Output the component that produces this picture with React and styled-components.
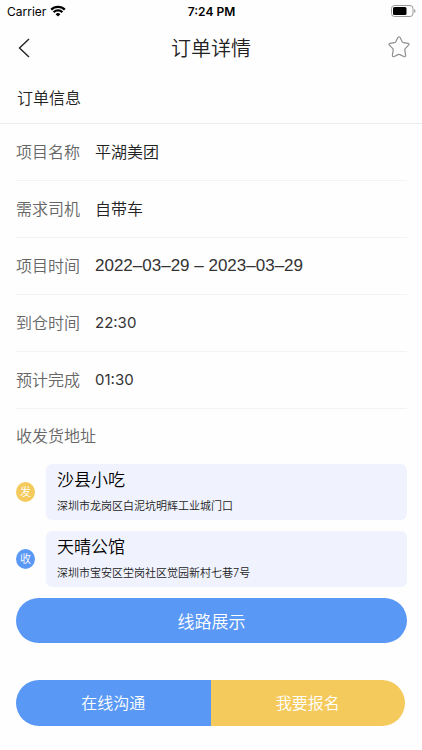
import styled, { createGlobalStyle, ThemeProvider } from "styled-components"

const details = [
  { label: "项目名称", value: "平湖美团", kind: "text" },
  { label: "需求司机", value: "自带车", kind: "text" },
  { label: "项目时间", value: "2022–03–29 – 2023–03–29", kind: "date" },
  { label: "到仓时间", value: "22:30", kind: "time" },
  { label: "预计完成", value: "01:30", kind: "time" },
]

const stops = [
  {
    id: "send",
    mark: "发",
    name: "沙县小吃",
    address: "深圳市龙岗区白泥坑明辉工业城门口",
  },
  {
    id: "receive",
    mark: "收",
    name: "天晴公馆",
    address: "深圳市宝安区坣岗社区觉园新村七巷7号",
  },
]

const theme = {
  blue: "#5a98f6",
  yellow: "#f4ca5c",
  card: "#f0f3fe",
  text: "#222222",
  label: "#666666",
  line: "#f3f3f3",
}

function WifiIcon() {
  return (
    <svg width="16" height="12" viewBox="0 0 16 12" aria-hidden="true">
      <g fill="none" stroke="#000" strokeWidth="2.3">
        <path d="M1.2 4.6a9.7 9.7 0 0 1 13.6 0" />
        <path d="M3.6 7.3a6.2 6.2 0 0 1 8.8 0" />
      </g>
      <path d="M8 11.6 5.6 9.2a3.4 3.4 0 0 1 4.8 0z" />
    </svg>
  )
}

function BatteryIcon() {
  return (
    <svg width="25" height="12" viewBox="0 0 25 12" aria-hidden="true">
      <rect x="0.5" y="0.5" width="21.5" height="11" rx="3" fill="none" stroke="#999" />
      <rect x="2" y="2" width="13.5" height="8" rx="1.5" />
      <path d="M23.3 4v4c1.6-.7 1.6-3.3 0-4z" fill="#8e8e8e" />
    </svg>
  )
}

function BackIcon() {
  return (
    <svg width="12" height="20" viewBox="0 0 12 20" aria-hidden="true">
      <path d="M11 1 1.5 10l9.5 9" fill="none" stroke="#222" strokeWidth="1.4" />
    </svg>
  )
}

function StarIcon() {
  return (
    <svg width="22" height="22" viewBox="0 0 22 22" aria-hidden="true">
      <path
        d="M9.9 1.5Q11 0 12.1 1.5L14.2 5.8Q14.6 6.6 15.5 6.7L20 7.3Q21.7 7.7 20.6 9.2L17.2 12.7Q16.7 13.3 16.8 14.1L17.6 19.2Q17.6 21.3 15.7 20.5L12 18.6Q11 18.1 10 18.6L6.3 20.5Q4.4 21.3 4.4 19.2L5.2 14.1Q5.3 13.3 4.8 12.7L1.4 9.2Q.3 7.7 2 7.3L6.5 6.7Q7.4 6.6 7.8 5.8Z"
        fill="none"
        stroke="#8f8f8f"
        strokeWidth="1.2"
        strokeLinejoin="round"
      />
    </svg>
  )
}

function App() {
  return (
    <ThemeProvider theme={theme}>
      <GlobalStyle />
      <StatusBar>
        <Carrier>
          Carrier <WifiIcon />
        </Carrier>
        <Clock>7:24 PM</Clock>
        <Battery>
          <BatteryIcon />
        </Battery>
      </StatusBar>
      <Header>
        <BackButton aria-label="返回">
          <BackIcon />
        </BackButton>
        <Title>订单详情</Title>
        <StarButton aria-label="收藏">
          <StarIcon />
        </StarButton>
      </Header>
      <SectionTitle>订单信息</SectionTitle>
      <Content>
        <Details>
          {details.map((d) => (
            <Row key={d.label}>
              <Label>{d.label}</Label>
              <Value $kind={d.kind}>{d.value}</Value>
            </Row>
          ))}
        </Details>
        <AddressTitle>收发货地址</AddressTitle>
        <Stops>
          {stops.map((s) => (
            <Stop key={s.id}>
              <Mark $kind={s.id}>{s.mark}</Mark>
              <Card>
                <StopName>{s.name}</StopName>
                <Address>{s.address}</Address>
              </Card>
            </Stop>
          ))}
        </Stops>
        <RouteButton>线路展示</RouteButton>
        <Actions>
          <ActionButton $kind="receive">在线沟通</ActionButton>
          <ActionButton $kind="send">我要报名</ActionButton>
        </Actions>
      </Content>
    </ThemeProvider>
  )
}

export default App

const GlobalStyle = createGlobalStyle`
  * {
    box-sizing: border-box;
  }

  body {
    margin: 0;
    background: #fefefe;
    color: ${({ theme }) => theme.text};
    font-family: Inter, "Noto Sans CJK SC", sans-serif;
    font-weight: 350;
  }
`

const StatusBar = styled.div`
  display: grid;
  grid-template-columns: 1fr auto 1fr;
  align-items: center;
  height: 22px;
  padding: 0 6px 0 7px;
  color: #000;
  font-size: 12px;
  font-weight: 400;
`

const Carrier = styled.span`
  display: flex;
  align-items: center;
  gap: 4px;
`

const Clock = styled.span`
  font-weight: 600;
`

const Battery = styled.span`
  display: flex;
  justify-content: flex-end;
`

const Header = styled.header`
  display: grid;
  grid-template-columns: 44px 1fr 44px;
  align-items: center;
  height: 52px;
  padding: 0 12px;
`

const Button = styled.button`
  border: 0;
  padding: 0;
  font-family: inherit;
  font-weight: inherit;
  cursor: pointer;
`

const BackButton = styled(Button)`
  display: flex;
  align-items: center;
  height: 44px;
  padding-left: 6px;
  background: none;
`

const StarButton = styled(Button)`
  display: flex;
  align-items: center;
  justify-content: flex-end;
  height: 44px;
  padding-bottom: 2px;
  background: none;
`

const Title = styled.h1`
  margin: 0;
  padding-top: 2px;
  font-size: 20px;
  font-weight: 350;
  line-height: 28px;
  text-align: center;
`

const SectionTitle = styled.h2`
  margin: 0;
  padding: 12px 17px 13px;
  border-bottom: 1px solid #ebebeb;
  font-size: 16px;
  font-weight: 350;
  line-height: 24px;
`

const Content = styled.main`
  padding: 0 15px 22px 16px;
`

const Details = styled.dl`
  margin: 0;
`

const Row = styled.div`
  display: flex;
  align-items: center;
  height: 57px;
  border-bottom: 1px solid ${({ theme }) => theme.line};
  font-size: 16px;
  line-height: 24px;
`

const Label = styled.dt`
  width: 79px;
  color: ${({ theme }) => theme.label};
`

const Value = styled.dd`
  margin: 0;
  color: ${({ theme, $kind }) => ($kind === "text" ? theme.text : "#333333")};
  font-family: ${({ $kind }) =>
    $kind === "date" ? '"Liberation Sans", sans-serif' : "inherit"};
  font-size: ${({ $kind }) => ({ text: 16, date: 17, time: 15 })[$kind]}px;
  font-weight: ${({ $kind }) => ($kind === "time" ? 400 : 350)};
`

const AddressTitle = styled.h3`
  margin: 0;
  padding: 15px 0 16px;
  color: ${({ theme }) => theme.label};
  font-size: 16px;
  font-weight: 350;
  line-height: 24px;
`

const Stops = styled.div`
  display: grid;
  gap: 11px;
`

const Stop = styled.div`
  display: flex;
  align-items: center;
  gap: 11px;
`

const Mark = styled.span`
  display: flex;
  align-items: center;
  justify-content: center;
  width: 19px;
  height: 20px;
  border-radius: 50%;
  background: ${({ theme, $kind }) => ($kind === "send" ? theme.yellow : theme.blue)};
  color: #fff;
  font-size: 11px;
  line-height: 18px;
`

const Card = styled.div`
  flex: 1;
  height: 56px;
  padding: 3px 11px;
  border-radius: 6px;
  background: ${({ theme }) => theme.card};
`

const StopName = styled.div`
  color: #000;
  font-size: 17px;
  line-height: 26px;
`

const Address = styled.div`
  font-size: 11px;
  line-height: 26px;
`

const RouteButton = styled(Button)`
  display: block;
  width: 100%;
  height: 45px;
  margin-top: 11px;
  border-radius: 23px;
  background: ${({ theme }) => theme.blue};
  color: #fff;
  font-size: 17px;
`

const Actions = styled.div`
  display: flex;
  margin: 37px 2px 0 0;
  border-radius: 23px;
  overflow: hidden;
`

const ActionButton = styled(Button)`
  flex: 1;
  height: 46px;
  padding-bottom: 2px;
  background: ${({ theme, $kind }) => ($kind === "send" ? theme.yellow : theme.blue)};
  color: #fff;
  font-size: 16px;
`
